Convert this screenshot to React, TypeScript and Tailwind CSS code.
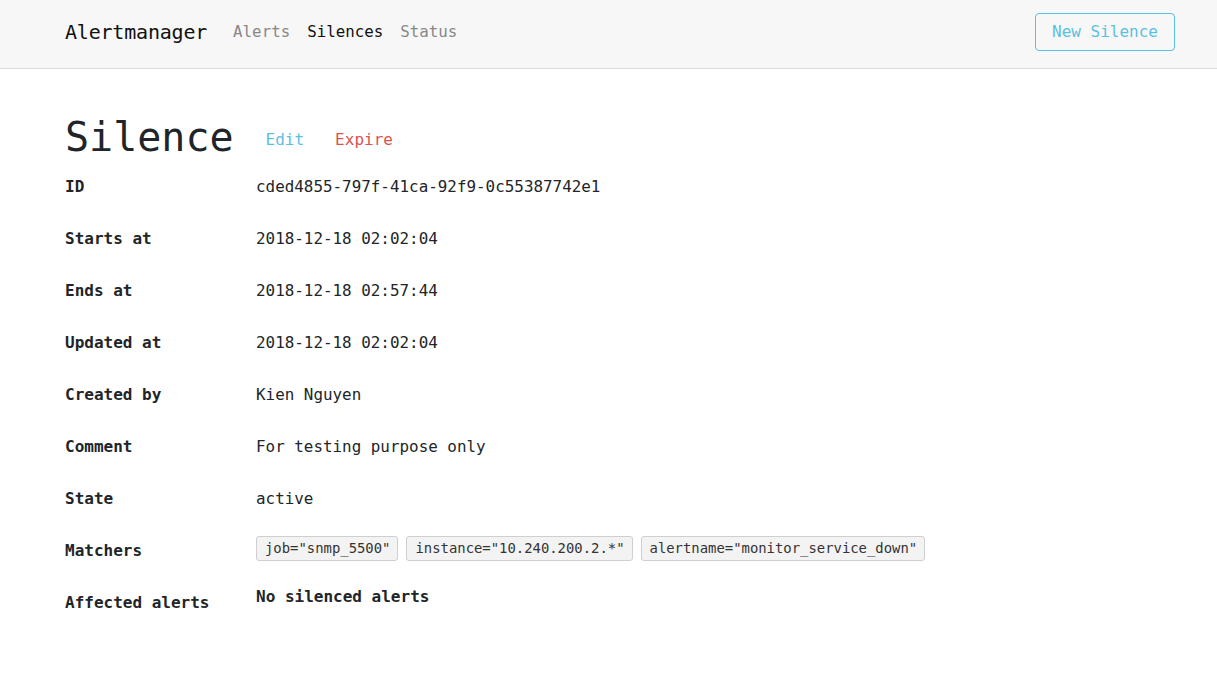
import React from "react";

const mono = { fontFamily: '"DejaVu Sans Mono", "Liberation Mono", monospace' };

const rows: { label: string; value: React.ReactNode }[] = [
  { label: "ID", value: "cded4855-797f-41ca-92f9-0c55387742e1" },
  { label: "Starts at", value: "2018-12-18 02:02:04" },
  { label: "Ends at", value: "2018-12-18 02:57:44" },
  { label: "Updated at", value: "2018-12-18 02:02:04" },
  { label: "Created by", value: "Kien Nguyen" },
  { label: "Comment", value: "For testing purpose only" },
  { label: "State", value: "active" },
];

const matchers = ['job="snmp_5500"', 'instance="10.240.200.2.*"', 'alertname="monitor_service_down"'];

export default function App() {
  return (
    <div className="min-h-[692px] bg-white text-[#212529] text-[16px]" style={mono}>
      <nav className="h-[69px] bg-[#f7f7f7] border-b border-[#dcdcdc] flex items-center pl-[65px] pr-[42px] pb-[4px]">
        <span className="text-[20px] tracking-[-0.2px] text-[#111] mr-[26px]">Alertmanager</span>
        <div className="flex items-center gap-[17px] text-[15.8px]">
          <span className="text-[#888]">Alerts</span>
          <span className="text-[#111]">Silences</span>
          <span className="text-[#888]">Status</span>
        </div>
        <div className="ml-auto">
          <button className="h-[38px] w-[140px] rounded-[4px] border border-[#5bc0de] text-[#5bc0de] text-[16px] flex items-center justify-center">
            New Silence
          </button>
        </div>
      </nav>
      <main className="px-[65px]">
        <div className="mt-[44px] h-[48px] flex items-center">
          <h1 className="text-[40px] leading-[48px] text-[#212529]">Silence</h1>
          <span className="ml-[32px] mt-[6px] text-[#5bc0de]">Edit</span>
          <span className="ml-[31px] mt-[6px] text-[#d9534f]">Expire</span>
        </div>
        {rows.map((r) => (
          <div key={r.label} className="h-[52px] flex items-center">
            <div className="w-[191px] font-bold text-[16px]">{r.label}</div>
            <div className="text-[15.9px]">{r.value}</div>
          </div>
        ))}
        <div className="h-[52px] flex items-center">
          <div className="w-[191px] font-bold text-[16px]">Matchers</div>
          <div className="flex gap-[8px] mb-[5px]">
            {matchers.map((m) => (
              <span
                key={m}
                className="h-[25px] pl-[8px] pr-[7px] flex items-center rounded-[3px] border border-[#cfcfcf] bg-[#f3f3f3] text-[13.9px] text-[#333]"
              >
                {m}
              </span>
            ))}
          </div>
        </div>
        <div className="h-[52px] flex items-center">
          <div className="w-[191px] font-bold text-[16px]">Affected alerts</div>
          <div className="font-bold text-[16px] mb-[12px]">No silenced alerts</div>
        </div>
      </main>
    </div>
  );
}
